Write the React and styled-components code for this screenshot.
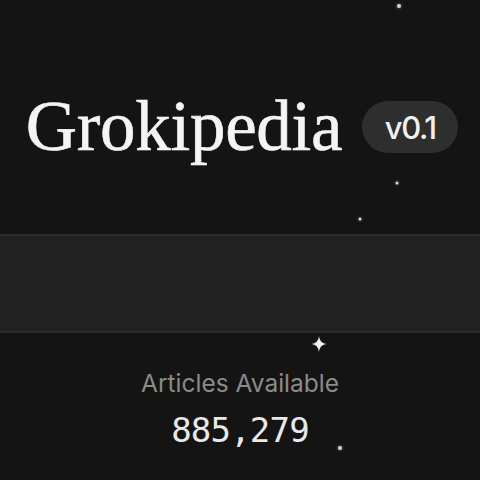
import React from 'react';
import styled, { createGlobalStyle } from 'styled-components';

const GlobalStyle = createGlobalStyle`
  html, body {
    margin: 0;
    padding: 0;
    background: #141414;
  }
`;

const Page = styled.div`
  position: relative;
  width: 480px;
  height: 480px;
  overflow: hidden;
  background: #141414;
  display: flex;
  flex-direction: column;
`;

const Hero = styled.header`
  height: 234px;
  box-sizing: border-box;
  padding: 18px 0 0 4px;
  display: flex;
  align-items: center;
  justify-content: center;
  gap: 20px;
`;

const Title = styled.h1`
  margin: 0;
  font-family: "Liberation Serif", "Times New Roman", serif;
  font-weight: 400;
  font-size: 71px;
  letter-spacing: -0.3px;
  color: #f4f4f4;
  line-height: 1;
  -webkit-text-stroke: 0.6px #f4f4f4;
`;

const Badge = styled.span`
  display: inline-flex;
  align-items: center;
  justify-content: center;
  width: 96px;
  height: 52px;
  border-radius: 26px;
  background: #2e2e2e;
  color: #f0f0f0;
  font-family: "Inter", "Liberation Sans", sans-serif;
  font-size: 31px;
  font-weight: 500;
  letter-spacing: -1.4px;
  margin-top: 2px;
`;

const Band = styled.section`
  height: 99px;
  box-sizing: border-box;
  background: #212121;
  border-top: 2px solid #2c2c2c;
  border-bottom: 2px solid #2c2c2c;
`;

const Stats = styled.div`
  display: flex;
  flex-direction: column;
  align-items: center;
  padding-top: 38px;
`;

const Label = styled.div`
  font-family: "Inter", "Liberation Sans", sans-serif;
  font-size: 24.5px;
  color: #8a8a8a;
  line-height: 1;
`;

const Count = styled.div`
  margin-top: 17px;
  font-family: "DejaVu Sans Mono", "Liberation Mono", monospace;
  font-size: 34px;
  color: #e9e9e9;
  line-height: 1;
  letter-spacing: -0.8px;
`;

const Star = styled.span`
  position: absolute;
  width: ${(p) => p.size}px;
  height: ${(p) => p.size}px;
  border-radius: 50%;
  background: #d8d8d8;
  box-shadow: 0 0 3px rgba(255, 255, 255, 0.5);
  transform: translate(-50%, -50%);
`;

const Sparkle = styled.svg`
  position: absolute;
  transform: translate(-50%, -50%);
`;

const stars = [
  { x: 399, y: 6, size: 4 },
  { x: 397, y: 183, size: 3 },
  { x: 360, y: 219, size: 3 },
  { x: 340, y: 448, size: 4 },
];

export default function App() {
  return (
    <>
      <GlobalStyle />
      <Page>
        <Hero>
          <Title>Grokipedia</Title>
          <Badge>v0.1</Badge>
        </Hero>
        <Band />
        <Stats>
          <Label>Articles Available</Label>
          <Count>885,279</Count>
        </Stats>
        {stars.map((s, i) => (
          <Star key={i} size={s.size} style={{ left: s.x, top: s.y }} />
        ))}
        <Sparkle width="16" height="16" viewBox="0 0 16 16" style={{ left: 319, top: 344 }}>
          <path
            d="M8 0 C8.6 5 11 7.4 16 8 C11 8.6 8.6 11 8 16 C7.4 11 5 8.6 0 8 C5 7.4 7.4 5 8 0 Z"
            fill="#f2f2f2"
          />
        </Sparkle>
      </Page>
    </>
  );
}
